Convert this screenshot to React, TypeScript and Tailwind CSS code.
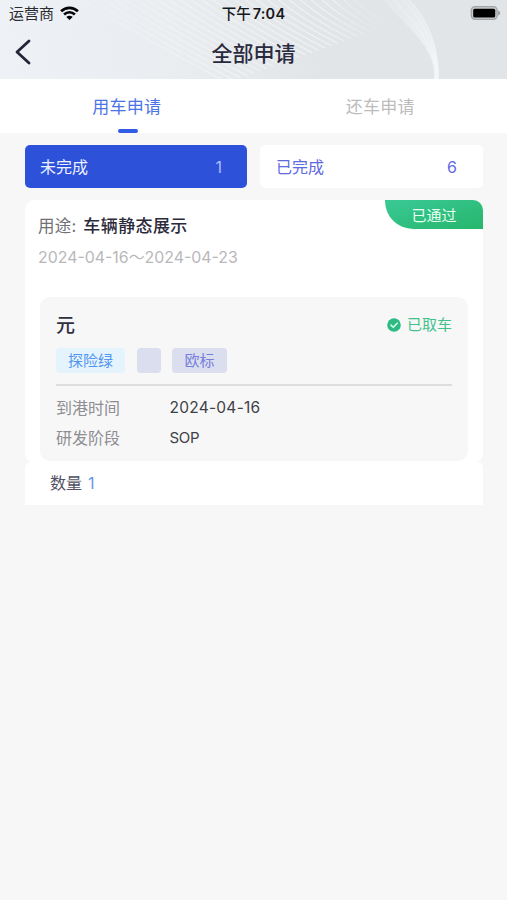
import React from "react";

function HeaderWaves() {
  const fan = Array.from({ length: 26 }, (_, i) => i);
  return (
    <svg className="absolute inset-0 h-full w-full" viewBox="0 0 507 79" preserveAspectRatio="none" fill="none" aria-hidden="true">
      <defs>
        <linearGradient id="base" x1="0" y1="79" x2="507" y2="0" gradientUnits="userSpaceOnUse">
          <stop offset="0" stopColor="#eef1f6" />
          <stop offset="0.35" stopColor="#e9edf0" />
          <stop offset="0.62" stopColor="#e1e5e8" />
          <stop offset="1" stopColor="#e1e5e8" />
        </linearGradient>
        <linearGradient id="strand" x1="90" y1="0" x2="385" y2="0" gradientUnits="userSpaceOnUse">
          <stop offset="0" stopColor="#fff" stopOpacity="0.15" />
          <stop offset="0.4" stopColor="#fff" stopOpacity="0.35" />
          <stop offset="0.8" stopColor="#fff" stopOpacity="0.5" />
          <stop offset="1" stopColor="#fff" stopOpacity="0" />
        </linearGradient>
        <linearGradient id="ribbon" x1="395" y1="0" x2="438" y2="79" gradientUnits="userSpaceOnUse">
          <stop offset="0" stopColor="#fff" stopOpacity="0.15" />
          <stop offset="0.6" stopColor="#fff" stopOpacity="0.4" />
          <stop offset="1" stopColor="#fff" stopOpacity="0.6" />
        </linearGradient>
      </defs>
      <rect width="507" height="79" fill="url(#base)" />
      <g stroke="url(#strand)" strokeWidth="1.2">
        {fan.map((i) => (
          <path key={i} d={`M${352 - i * 11} -3Q${366 - i * 9.5} ${13 + i * 0.7} ${390 - i * 6.5} ${25 + i * 2.3}`} />
        ))}
      </g>
      <path d="M384 0C398 20 438 46 434 79H438.300C440 40 420 10 409 0Z" fill="url(#ribbon)" />
      <g stroke="#fff" strokeWidth="0.8" strokeOpacity="0.3">
        <path d="M409 0C420 10 440 40 438.300 79" strokeOpacity="0.55" />
        <path d="M403 0C416 14 438 42 437 79" />
        <path d="M394 0C410 18 438 45 436 79" />
      </g>
    </svg>
  );
}

function WifiIcon() {
  return (
    <svg className="ml-[6px] h-[15px] w-[19px]" viewBox="0 0 19 15" fill="none" stroke="#050506" strokeWidth="2.7">
      <path d="M1.100 5.300C5.900 0.600 13.100 0.600 17.900 5.300" />
      <path d="M4.100 8.500C7.200 5.500 11.800 5.500 14.900 8.500" />
      <path d="M9.500 14L6.300 10.900C8.100 9.200 10.900 9.200 12.700 10.900Z" fill="#050506" stroke="none" />
    </svg>
  );
}

function BatteryIcon() {
  return (
    <svg className="h-[15px] w-[31px]" viewBox="0 0 31 15">
      <rect x="1.300" y="0.700" width="25.800" height="12.600" rx="3.700" fill="#c8cacc" stroke="#a2a4a6" strokeWidth="1.300" />
      <rect x="3.200" y="2.700" width="22" height="8.700" rx="1.500" fill="#000" />
      <path d="M28 4.700Q30.300 5.300 30.300 7T28 9.400Z" fill="#a2a4a6" />
    </svg>
  );
}

function Header() {
  return (
    <header className="relative h-[79px] overflow-hidden">
      <HeaderWaves />
      <div className="relative grid h-[27px] grid-cols-[1fr_auto_1fr] items-center">
        <div className="flex items-center pl-[9px] text-[15px] text-[#292c30]">
          <span className="pt-px">运营商</span>
          <WifiIcon />
        </div>
        <div className="flex items-center gap-[2px] text-[14.5px] text-[#15171a]">
          <span className="font-medium">下午</span>
          <span className="font-semibold tracking-[0.2px]">7:04</span>
        </div>
        <div className="flex justify-end pr-[6px]">
          <BatteryIcon />
        </div>
      </div>
      <div className="relative grid h-[52px] grid-cols-[1fr_auto_1fr] items-center">
        <button className="pb-[2px] pl-[14px]" aria-label="返回">
          <svg className="h-[26px] w-[17px]" viewBox="0 0 17 26" fill="none" stroke="#242436" strokeWidth="2.8" strokeLinecap="round" strokeLinejoin="round">
            <path d="M15 2L3 13L15 24" />
          </svg>
        </button>
        <h1 className="pt-px text-[21px] font-medium text-[#2a2a3e]">全部申请</h1>
      </div>
    </header>
  );
}

function Tabs() {
  return (
    <nav className="grid h-[54px] grid-cols-2 bg-white text-center text-[17px] tracking-[0.3px]">
      <div className="flex flex-col items-center justify-between pt-[16px] text-[#4a73e8]">
        <span className="leading-[25px]">用车申请</span>
        <span className="ml-[2px] h-[4px] w-[20px] rounded-full bg-[#315be7]" />
      </div>
      <div className="pt-[16px] leading-[25px] text-[#bcbcbc]">还车申请</div>
    </nav>
  );
}

function VehicleCard() {
  return (
    <div className="mx-[15px] mt-[27px] h-[164px] rounded-[10px] bg-[#f7f7f7] px-[16px] pt-[15px]">
      <div className="flex h-[27px] items-center justify-between">
        <h2 className="pt-px text-[19px] font-medium text-[#30303f]">元</h2>
        <div className="flex items-center pb-px text-[15px] text-[#42c18d]">
          <svg className="mr-[6px] h-[14px] w-[14px]" viewBox="0 0 14 14" fill="none">
            <circle cx="7" cy="7" r="6.8" fill="#2dbb83" />
            <path d="M4 7.100L6.300 9.200L10.200 5.200" stroke="#dcfff0" strokeWidth="1.500" strokeLinecap="round" />
          </svg>
          <span>已取车</span>
        </div>
      </div>
      <div className="mt-[9px] flex h-[25px] text-[15px] leading-[25px]">
        <span className="w-[69px] rounded-[4px] bg-[#e5f3fd] text-center text-[#5295ef]">探险绿</span>
        <span className="ml-[12px] w-[24px] rounded-[4px] bg-[#dadeee]" />
        <span className="ml-[11px] w-[55px] rounded-[4px] bg-[#dadeee] text-center text-[#7680dc]">欧标</span>
      </div>
      <div className="mt-[11px] h-[2px] bg-[#dcdddd]" />
      <dl className="mt-[7px] grid grid-cols-[113.5px_1fr] text-[16px] leading-[30px] text-[#8e8e92]">
        <dt>到港时间</dt>
        <dd className="text-[15.5px] tracking-[0.25px] text-[#404046]">2024-04-16</dd>
        <dt>研发阶段</dt>
        <dd className="text-[15px] tracking-[-0.3px] text-[#404046]">SOP</dd>
      </dl>
    </div>
  );
}

export default function App() {
  return (
    <div className="h-[900px] w-[507px] overflow-hidden bg-[#f7f7f7] font-[Inter,'Noto_Sans_CJK_SC',sans-serif]" lang="zh-CN">
      <Header />
      <Tabs />
      <main className="pl-[25px] pr-[24px] pt-[12px]">
        <div className="flex gap-[13px] text-[16px]">
          <div className="flex h-[43px] w-[222px] items-center justify-between rounded-[5px] bg-[#2d51d9] pl-[15px] pr-[25px] text-[#edf1ff]">
            <span>未完成</span>
            <span className="text-[#aebcff]">1</span>
          </div>
          <div className="flex h-[43px] flex-1 items-center justify-between rounded-[5px] bg-white pl-[16px] pr-[26px] text-[#6169df]">
            <span>已完成</span>
            <span>6</span>
          </div>
        </div>
        <section className="mt-[12px] h-[262px] rounded-t-[10px] rounded-b-[8px] bg-white">
          <div className="flex justify-between">
            <div className="pl-[13px] pt-[14px]">
              <div className="flex gap-[7px] text-[17px] leading-[24px]">
                <span className="text-[16.5px] tracking-[0.2px] text-[#717176]">用途:</span>
                <span className="tracking-[0.4px] font-medium text-[#2b2a3a]">车辆静态展示</span>
              </div>
              <div className="mt-[8px] text-[15.9px] leading-[24px] text-[#b8b8bb]">2024-04-16～2024-04-23</div>
            </div>
            <div className="h-[29px] w-[98px] rounded-tr-[10px] rounded-bl-[28px] bg-linear-to-br from-[#3ac996] to-[#26b66b] text-center text-[15px] leading-[31px] text-[#e5fff4]">已通过</div>
          </div>
          <VehicleCard />
        </section>
        <footer className="flex h-[43px] items-center gap-[6px] rounded-t-[6px] bg-white pb-[2px] pl-[25px] text-[16px] text-[#515064]">
          <span>数量</span>
          <span className="text-[#6296ef]">1</span>
        </footer>
      </main>
    </div>
  );
}
